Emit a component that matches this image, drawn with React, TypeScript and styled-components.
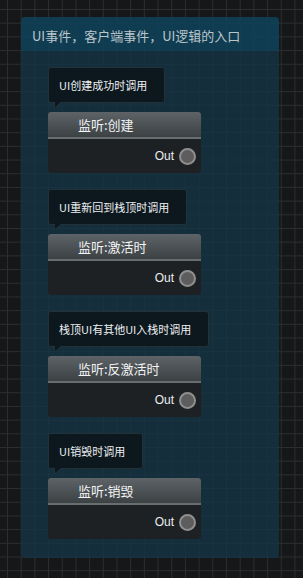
import React from 'react';
import styled, { createGlobalStyle } from 'styled-components';

const Global = createGlobalStyle`
  html, body { margin: 0; padding: 0; background: #161718; }
  body { width: 303px; height: 578px; overflow: hidden; font-family: "Noto Sans CJK SC", "Noto Sans", sans-serif; }
`;

const Canvas = styled.div`
  width: 303px;
  height: 578px;
  box-sizing: border-box;
  padding: 17px 24px 20px 21px;
  background-color: #161718;
  background-image:
    linear-gradient(to right, #2b2d2f 1px, transparent 1px),
    linear-gradient(to bottom, #2b2d2f 1px, transparent 1px);
  background-size: 13.7px 13.7px;
  background-position: 7px 9px;
`;

const Group = styled.div`
  width: 258px;
  height: 541px;
  border-radius: 4px;
  overflow: hidden;
  display: flex;
  flex-direction: column;
  background: rgba(20, 52, 70, 0.78);
`;

const GroupHeader = styled.div`
  height: 34px;
  flex: none;
  box-sizing: border-box;
  padding: 2px 0 0 11px;
  display: flex;
  align-items: center;
  background: rgba(12, 72, 100, 0.55);
  color: #bac5ca;
  font-size: 13px;
  white-space: nowrap;
`;

const GroupBody = styled.div`
  display: flex;
  flex-direction: column;
  gap: 16px;
  padding: 16px 0 0 27px;
`;

const Item = styled.div`
  display: flex;
  flex-direction: column;
  align-items: flex-start;
  gap: 9px;
`;

const Bubble = styled.div`
  position: relative;
  height: 36px;
  box-sizing: border-box;
  padding: 0 17px 0 10px;
  display: flex;
  align-items: center;
  background: #0c171e;
  border: 1px solid #233139;
  border-radius: 3px;
  color: #eef0f1;
  font-size: 11px;
  white-space: nowrap;

  &::before {
    content: '';
    position: absolute;
    left: 5px;
    top: 100%;
    border-top: 7px solid #233139;
    border-right: 9px solid transparent;
  }
  &::after {
    content: '';
    position: absolute;
    left: 6px;
    top: 100%;
    margin-top: -1px;
    border-top: 6px solid #0c171e;
    border-right: 7px solid transparent;
  }
`;

const Node = styled.div`
  width: 153px;
  border-radius: 3px;
  overflow: hidden;
  background: #1e2123;
`;

const NodeHeader = styled.div`
  height: 25px;
  padding: 0 0 0 30px;
  display: flex;
  align-items: center;
  background: linear-gradient(to bottom, #5e6367, #3c4144);
  border-bottom: 2px solid #686d70;
  color: #f2f4f5;
  font-size: 13px;
  white-space: nowrap;
`;

const NodeBody = styled.div`
  height: 34px;
  display: flex;
  align-items: center;
  justify-content: flex-end;
  gap: 5px;
  padding-right: 5px;
`;

const PinLabel = styled.span`
  font-family: "Liberation Sans", Arial, sans-serif;
  font-size: 12px;
  color: #eceeef;
`;

const Pin = styled.span`
  width: 17px;
  height: 17px;
  box-sizing: border-box;
  border-radius: 50%;
  border: 2px solid #8f8f8f;
  background: #5d5d5d;
`;

const events = [
  { note: 'UI创建成功时调用', title: '监听:创建' },
  { note: 'UI重新回到栈顶时调用', title: '监听:激活时' },
  { note: '栈顶UI有其他UI入栈时调用', title: '监听:反激活时' },
  { note: 'UI销毁时调用', title: '监听:销毁' },
];

export default function App() {
  return (
    <>
      <Global />
      <Canvas>
        <Group>
          <GroupHeader>UI事件，客户端事件，UI逻辑的入口</GroupHeader>
          <GroupBody>
            {events.map((e) => (
              <Item key={e.title}>
                <Bubble>{e.note}</Bubble>
                <Node>
                  <NodeHeader>{e.title}</NodeHeader>
                  <NodeBody>
                    <PinLabel>Out</PinLabel>
                    <Pin />
                  </NodeBody>
                </Node>
              </Item>
            ))}
          </GroupBody>
        </Group>
      </Canvas>
    </>
  );
}
